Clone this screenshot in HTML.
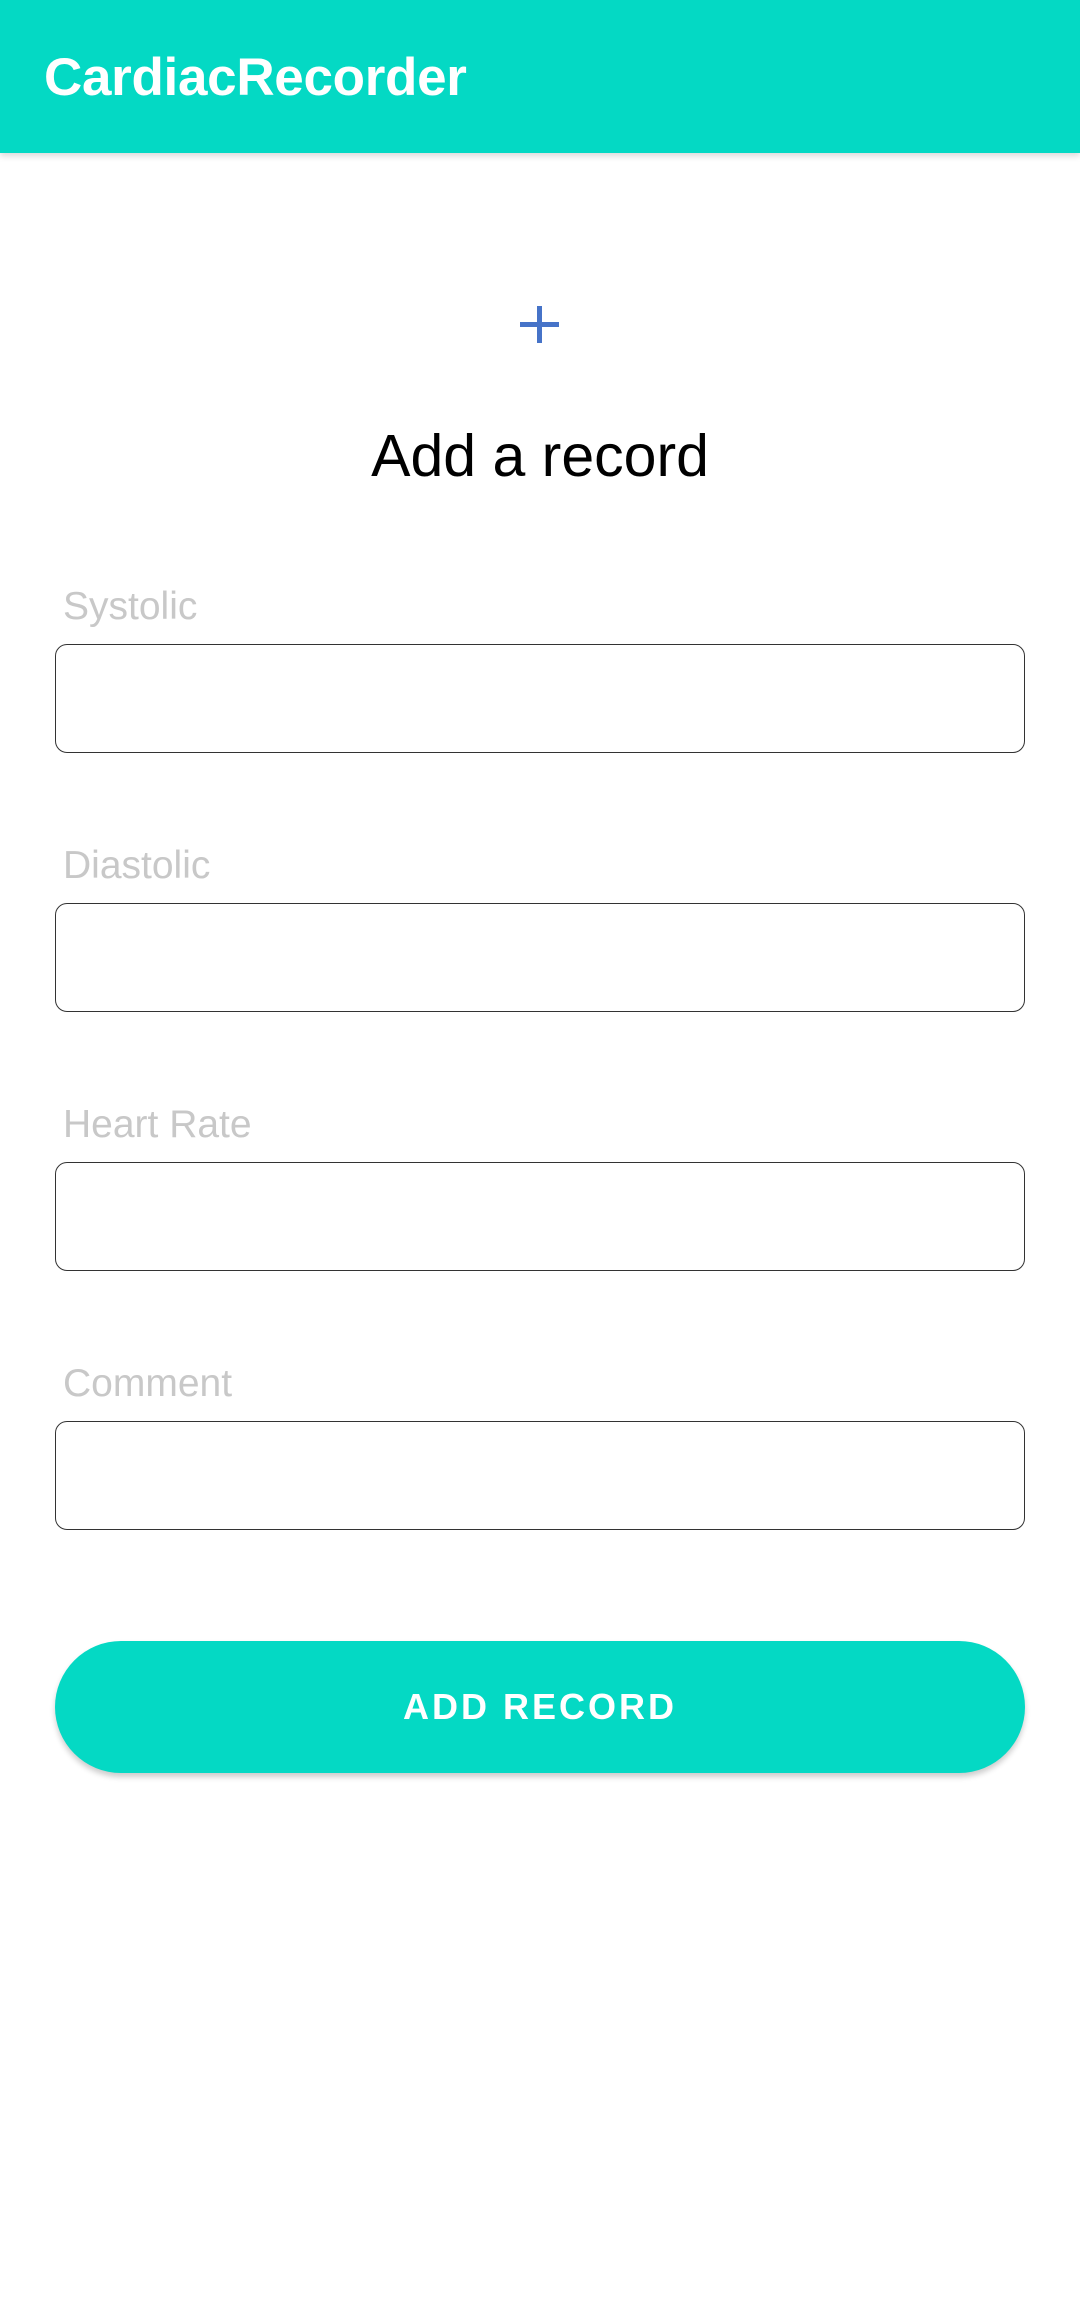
<!DOCTYPE html>
<html><head><meta charset="utf-8"><style>
*{margin:0;padding:0;box-sizing:border-box}
body{width:1080px;height:2307px;background:#fff;position:relative;font-family:"Liberation Sans",sans-serif;overflow:hidden}
.hdr{position:absolute;left:0;top:0;width:1080px;height:153px;background:#04D9C4;box-shadow:0 3px 6px rgba(0,0,0,.15)}
.hdr span{position:absolute;left:44px;top:48px;font-size:53px;line-height:60px;color:#fff;font-weight:bold;letter-spacing:-0.3px}
.plus{position:absolute;left:520px;top:306px;width:39px;height:37px}
.plus:before{content:"";position:absolute;left:0;top:16px;width:39px;height:5px;background:#4673C8}
.plus:after{content:"";position:absolute;left:17px;top:0;width:5px;height:37px;background:#4673C8}
.title{position:absolute;left:0;width:1080px;top:421px;text-align:center;font-size:59px;line-height:70px;color:#000}
.lbl{position:absolute;left:63px;font-size:39px;line-height:40px;color:#c8c8c8}
.box{position:absolute;left:55px;width:970px;height:109px;border:1.5px solid #333;border-radius:12px}
.btn{position:absolute;left:55px;top:1641px;width:970px;height:132px;border-radius:66px;background:#04D9C4;box-shadow:0 4px 6px rgba(0,0,0,.2);color:#fff;text-align:center;line-height:132px;font-size:36px;letter-spacing:3px;font-weight:bold}
</style></head><body>
<div class="hdr"><span>CardiacRecorder</span></div>
<div class="plus"></div>
<div class="title">Add a record</div>
<div class="lbl" style="top:587px">Systolic</div>
<div class="box" style="top:644px"></div>
<div class="lbl" style="top:846px">Diastolic</div>
<div class="box" style="top:903px"></div>
<div class="lbl" style="top:1105px">Heart Rate</div>
<div class="box" style="top:1162px"></div>
<div class="lbl" style="top:1364px">Comment</div>
<div class="box" style="top:1421px"></div>
<div class="btn">ADD RECORD</div>
</body></html>
